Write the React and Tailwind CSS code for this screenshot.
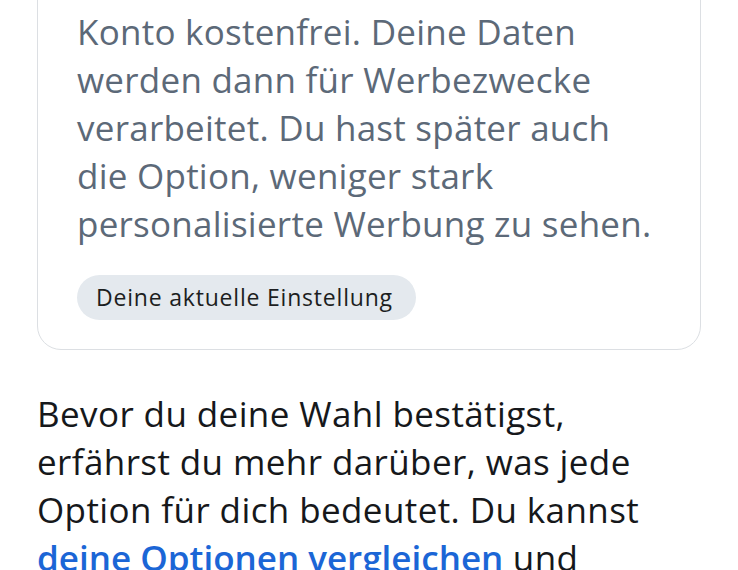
import React from 'react';

export default function App() {
  return (
    <div className="w-[738px] h-[570px] overflow-hidden bg-white font-['Open_Sans',sans-serif]">
      {/* Option card */}
      <div className="-mt-[82px] mx-[37px] border-[1.5px] border-[#dcdfe3] rounded-[24px] px-[39px] pt-[41px] pb-[29px]">
        <p className="text-[35px] leading-[48px] text-[#5c6978] tracking-[0.25px]">
          Du nutzt weiterhin dein Facebook-
          <br />
          Konto kostenfrei. Deine Daten
          <br />
          werden dann für Werbezwecke
          <br />
          verarbeitet. Du hast später auch
          <br />
          die Option, weniger stark
          <br />
          personalisierte Werbung zu sehen.
        </p>
        <div className="mt-[27px] inline-flex items-center h-[45px] pl-[19px] pr-[23px] rounded-full bg-[#e4e9ee]">
          <span className="text-[23px] font-medium text-[#1c1e21] tracking-[0.8px]">Deine aktuelle Einstellung</span>
        </div>
      </div>

      {/* Info text */}
      <p className="mt-[40px] mx-[37px] text-[35px] leading-[48px] text-[#16181b] tracking-[0.4px]">
        Bevor du deine Wahl bestätigst,
        <br />
        erfährst du mehr darüber, was jede
        <br />
        Option für dich bedeutet. Du kannst
        <br />
        <a className="font-semibold text-[#1b66d6] tracking-[0px]">deine Optionen vergleichen</a> und
      </p>
    </div>
  );
}
